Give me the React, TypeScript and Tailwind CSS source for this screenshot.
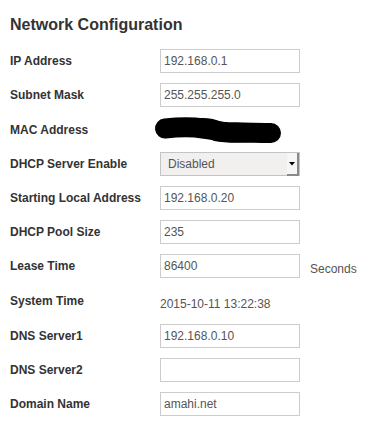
import React from "react";

const font = { fontFamily: '"Liberation Sans", Arial, sans-serif' };

function Label({ children }: { children: React.ReactNode }) {
  return (
    <div className="w-[150px] shrink-0 text-[12px] font-bold text-[#333333] leading-[24px]">
      {children}
    </div>
  );
}

function Field({ value }: { value: string }) {
  return (
    <input
      readOnly
      value={value}
      className="w-[140px] h-[24px] border border-[#cccccc] bg-white px-[3px] text-[12px] text-[#555555] outline-none"
      style={font}
    />
  );
}

function Row({
  label,
  children,
  h = "h-[24px]",
}: {
  label: string;
  children?: React.ReactNode;
  h?: string;
}) {
  return (
    <div className={`flex items-center ${h}`}>
      <Label>{label}</Label>
      {children}
    </div>
  );
}

export default function App() {
  return (
    <div className="w-[370px] h-[435px] bg-white pl-[10px]" style={font}>
      <h1 className="pt-[15px] text-[16px] leading-[20px] font-bold text-[#333333]">
        Network Configuration
      </h1>
      <div className="mt-[14px] flex flex-col gap-[10px]">
        <Row label="IP Address">
          <Field value="192.168.0.1" />
        </Row>
        <Row label="Subnet Mask">
          <Field value="255.255.255.0" />
        </Row>
        <div className="flex items-start h-[25px]">
          <div className="w-[150px] shrink-0 text-[12px] font-bold text-[#333333] leading-[24px] pt-px">
            MAC Address
          </div>
          <svg
            width="130"
            height="25"
            viewBox="0 0 130 25"
            className="-ml-[5px] overflow-visible"
          >
            <path
              d="M10 11.5 C 25 10, 38 10, 48 11.5 C 58 13, 64 14.5, 72 15 C 90 15.5, 105 16, 116 16"
              stroke="#000"
              strokeWidth="20"
              strokeLinecap="round"
              fill="none"
            />
            <path d="M28 8 C 42 4, 55 4, 66 9" stroke="#000" strokeWidth="8" strokeLinecap="round" fill="none" />
            <path d="M60 20 C 70 22, 85 22, 100 21" stroke="#000" strokeWidth="8" strokeLinecap="round" fill="none" />
          </svg>
        </div>
        <Row label="DHCP Server Enable">
          <div className="flex w-[140px] h-[24px] border border-[#c4c4c4] bg-[#f1f0ef] text-[12px] text-[#555555]">
            <div className="flex-1 pl-[7px] leading-[22px]">Disabled</div>
            <div className="w-[12px] h-[23px] bg-[#f6f6f6] border-r-2 border-b-2 border-[#8a8a8a] flex items-center justify-center">
              <svg width="6" height="4" viewBox="0 0 6 4">
                <path d="M0 0 H6 L3 3.5 Z" fill="#000" />
              </svg>
            </div>
          </div>
        </Row>
        <Row label="Starting Local Address">
          <Field value="192.168.0.20" />
        </Row>
        <Row label="DHCP Pool Size">
          <Field value="235" />
        </Row>
        <Row label="Lease Time">
          <Field value="86400" />
          <span className="ml-[10px] pt-[5px] text-[12px] text-[#555555]">Seconds</span>
        </Row>
        <div className="flex items-start h-[26px]">
          <div className="w-[150px] shrink-0 text-[12px] font-bold text-[#333333] leading-[24px] pt-px">
            System Time
          </div>
          <span className="pt-[4px] text-[12px] leading-[24px] text-[#555555]">
            2015-10-11 13:22:38
          </span>
        </div>
        <Row label="DNS Server1">
          <Field value="192.168.0.10" />
        </Row>
        <Row label="DNS Server2">
          <Field value="" />
        </Row>
        <Row label="Domain Name">
          <Field value="amahi.net" />
        </Row>
      </div>
    </div>
  );
}
